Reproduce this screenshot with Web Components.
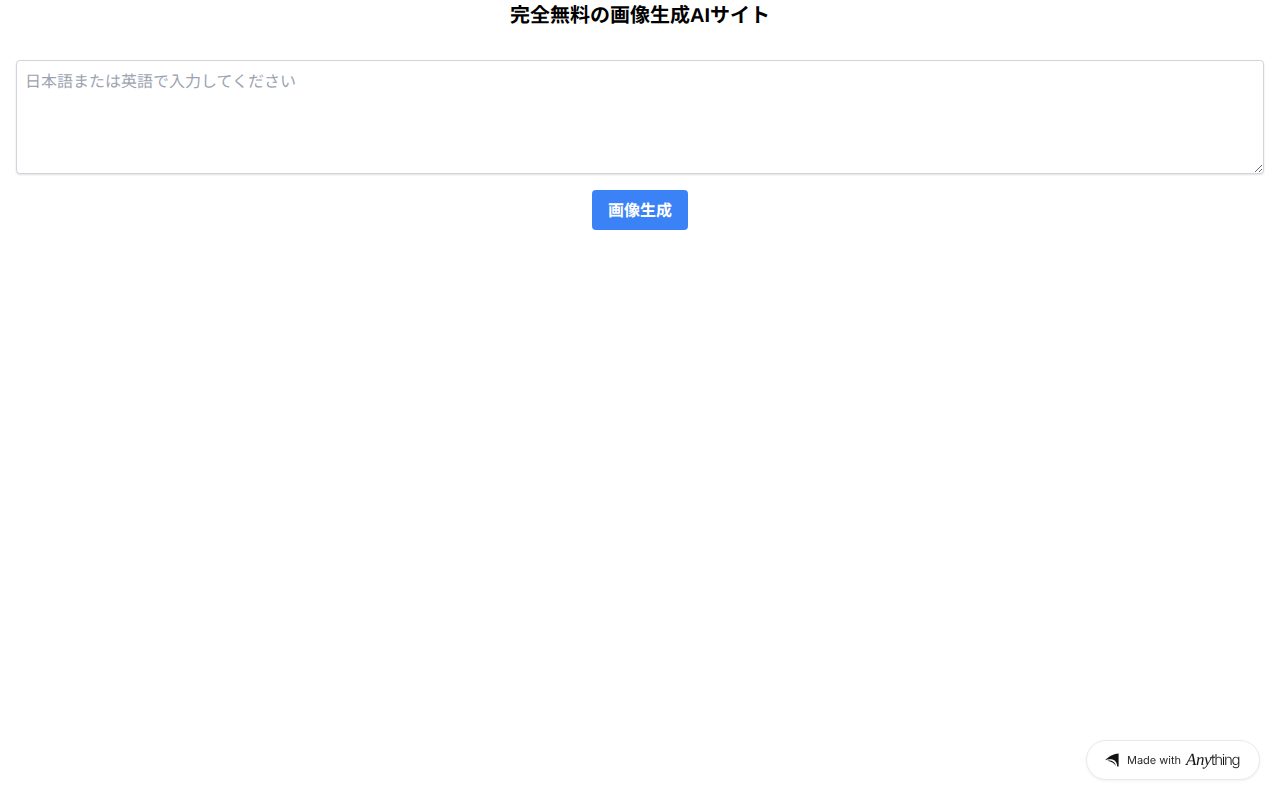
<!DOCTYPE html>
<html lang="ja">
<head>
<meta charset="utf-8">
<title>完全無料の画像生成AIサイト</title>
<style>
  html, body {
    margin: 0;
    background: #fff;
  }
  body {
    font-family: "Liberation Sans", "Noto Sans CJK JP", sans-serif;
  }
</style>
</head>
<body>
<image-generator heading="完全無料の画像生成AIサイト" placeholder="日本語または英語で入力してください" action="画像生成"></image-generator>
<made-with-badge></made-with-badge>

<script>
/**
 * The prompt form: heading, textarea and submit button.
 */
const generatorTemplate = document.createElement('template')
generatorTemplate.innerHTML = `
  <style>
    :host {
      display: block;
      padding: 0 16px;
      font-family: "Liberation Sans", "Noto Sans CJK JP", sans-serif;
      text-rendering: geometricPrecision;
    }
    h1 {
      box-sizing: border-box;
      height: 28px;
      margin: 0 0 32px;
      padding-top: 2px;
      font-size: 20px;
      line-height: 28px;
      font-weight: 700;
      text-align: center;
      color: #000;
    }
    textarea {
      display: block;
      box-sizing: border-box;
      width: 100%;
      height: 114px;
      margin: 0 0 16px;
      padding: 10px 8px 6px;
      border: 1px solid #d1d5db;
      border-radius: 4px;
      box-shadow: 0 1px 2px rgba(0, 0, 0, 0.12);
      font: inherit;
      font-size: 16px;
      line-height: 24px;
      color: #000;
      background: #fff;
      resize: vertical;
      outline: none;
      text-rendering: geometricPrecision;
    }
    textarea::placeholder {
      color: #9ca3af;
      opacity: 1;
    }
    .actions {
      display: flex;
      justify-content: center;
    }
    button {
      height: 40px;
      padding: 4px 16px 0;
      border: 0;
      border-radius: 4px;
      font: inherit;
      font-size: 16px;
      line-height: 24px;
      font-weight: 700;
      color: #fff;
      background: #3b82f6;
      cursor: pointer;
      text-rendering: geometricPrecision;
    }
  </style>
  <h1></h1>
  <textarea></textarea>
  <div class="actions"><button type="button"></button></div>
`

customElements.define('image-generator',
  class extends HTMLElement {
    constructor () {
      super()
      this.attachShadow({ mode: 'open' })
        .appendChild(generatorTemplate.content.cloneNode(true))
    }

    connectedCallback () {
      this.shadowRoot.querySelector('h1').textContent = this.getAttribute('heading')
      this.shadowRoot.querySelector('textarea').placeholder = this.getAttribute('placeholder')
      this.shadowRoot.querySelector('button').textContent = this.getAttribute('action')
    }
  })

/**
 * The floating "Made with Anything" pill.
 */
const badgeTemplate = document.createElement('template')
badgeTemplate.innerHTML = `
  <style>
    :host {
      display: flex;
      position: fixed;
      right: 20px;
      bottom: 20px;
      box-sizing: border-box;
      width: 174px;
      height: 40px;
      padding-left: 18px;
      align-items: center;
      gap: 8px;
      border: 1px solid #e9e9e9;
      border-radius: 20px;
      background: #fff;
      box-shadow: 0 1px 3px rgba(0, 0, 0, 0.06);
      font-family: Inter, "Liberation Sans", sans-serif;
      color: #292929;
      text-rendering: geometricPrecision;
    }
    svg {
      display: block;
      flex: none;
    }
    .made {
      width: 54px;
      font-size: 11px;
      line-height: 16px;
      white-space: nowrap;
    }
    .brand {
      display: flex;
      align-items: baseline;
      margin-left: -3px;
      font-size: 15px;
      line-height: 20px;
      letter-spacing: -1.3px;
      color: #111;
    }
    .any {
      width: 25px;
      font-family: "Liberation Serif", serif;
      font-style: italic;
      font-size: 17px;
      letter-spacing: -0.5px;
    }
    .thing {
      font-weight: 300;
    }
  </style>
  <svg width="14" height="14" viewBox="0 0 14 14" aria-hidden="true">
    <path fill="#111" d="M13.6 0.4 L13.6 13.6 L12.2 13.6 C12.2 10.6 10.8 7.6 7.6 6.6 C5.2 5.9 2.6 6.2 0.2 7.2 C3 3.8 8 1 13.6 0.4 Z"/>
    <path fill="#111" d="M2.4 7.8 C6 7 10 8.8 10.9 13 C9.2 10.2 6.2 8.4 2.4 7.8 Z"/>
  </svg>
  <span class="made">Made with</span>
  <span class="brand"><span class="any">Any</span><span class="thing">thing</span></span>
`

customElements.define('made-with-badge',
  class extends HTMLElement {
    constructor () {
      super()
      this.attachShadow({ mode: 'open' })
        .appendChild(badgeTemplate.content.cloneNode(true))
    }
  })
</script>
</body>
</html>
